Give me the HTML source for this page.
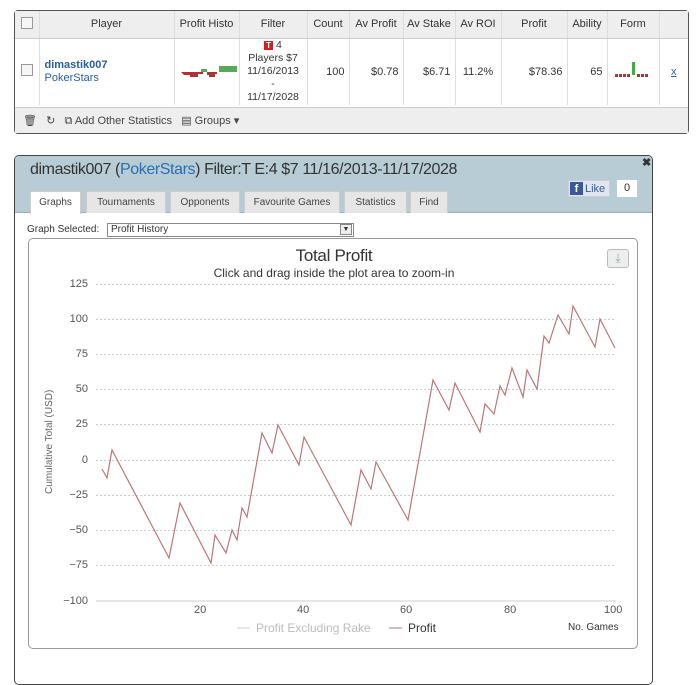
<!DOCTYPE html>
<html><head><meta charset="utf-8"><style>
*{box-sizing:border-box;margin:0;padding:0}
body{width:700px;height:652px;background:#fff;font-family:"Liberation Sans",sans-serif;position:relative;overflow:hidden;font-size:11px;color:#333}
.a{position:absolute}
table{border-collapse:collapse;position:absolute;left:15px;top:11px;width:673px}
td{border-right:1px solid #ddd;text-align:center;font-size:11px;color:#333}
.hd td{height:27px;background:#eee;border-bottom:1px solid #ccc}
.rw td{height:67px}
.cb{display:inline-block;width:12px;height:12px;border:1px solid #999;background:#f6f6f6}
.tab{position:absolute;top:191px;height:22px;background:#e6e6e6;border:1px solid #ccc;border-bottom:none;font-size:10px;color:#444;text-align:center;line-height:21px}
.yl{position:absolute;left:40px;width:48px;text-align:right;font-size:11px;color:#555}
.xl{position:absolute;top:604px;font-size:11px;color:#555}
</style></head><body>
<div class="a" style="left:14px;top:10px;width:675px;height:124px;border:1px solid #555;border-radius:4px"></div>
<table>
<tr class="hd"><td style="width:24px"><span class="cb"></span></td><td style="width:135px">Player</td><td style="width:65px">Profit Histo</td><td style="width:68px">Filter</td><td style="width:42px">Count</td><td style="width:54px">Av Profit</td><td style="width:52px">Av Stake</td><td style="width:46px">Av ROI</td><td style="width:66px">Profit</td><td style="width:40px">Ability</td><td style="width:52px">Form</td><td style="border:none;border-bottom:1px solid #ccc"></td></tr>
<tr class="rw"><td><span class="cb"></span></td><td style="text-align:left;padding-left:5px;line-height:13px"><b style="color:#2a5d9f">dimastik007</b><br><span style="color:#2a5d9f">PokerStars</span></td>
<td><svg width="60" height="20" viewBox="0 0 60 20"><path d="M4 12h22v2h-5v3h-8v-2h-6z M30 12h10v2h-2v3h-6v-2h-2z" fill="#a33"/><path d="M24 9h6v3h-6z M42 6h18v6h-18z" fill="#5a5"/></svg></td>
<td style="line-height:13px;font-size:10.5px"><span style="background:#c22;color:#fff;font-size:8px;font-weight:bold;padding:0 2px">T</span> 4<br>Players $7<br>11/16/2013<br>-<br>11/17/2028</td>
<td style="text-align:right;padding-right:4px">100</td><td style="text-align:right;padding-right:4px">$0.78</td><td style="text-align:right;padding-right:4px">$6.71</td><td>11.2%</td><td style="text-align:right;padding-right:4px">$78.36</td><td style="text-align:right;padding-right:4px">65</td>
<td><svg width="40" height="20"><g fill="#a33"><rect x="2" y="14" width="3" height="3"/><rect x="6" y="14" width="3" height="3"/><rect x="10" y="14" width="3" height="3"/><rect x="14" y="14" width="3" height="3"/><rect x="24" y="14" width="3" height="3"/><rect x="28" y="14" width="3" height="3"/><rect x="32" y="14" width="3" height="3"/></g><rect x="19" y="2" width="3" height="13" fill="#4a4"/></svg></td>
<td style="border:none;color:#2a5d9f;text-decoration:underline">x</td></tr>
</table>
<div class="a" style="left:15px;top:107px;width:673px;height:26px;background:#eee;border-top:1px solid #ccc;font-size:11px;color:#444;line-height:26px;padding-left:8px">🗑&nbsp;&nbsp;&nbsp;↻&nbsp;&nbsp;&nbsp;⧉ Add Other Statistics&nbsp;&nbsp;&nbsp;▤ Groups ▾</div>

<div class="a" style="left:14px;top:155px;width:639px;height:530px;border:1px solid #444;border-radius:5px;overflow:hidden">
<div class="a" style="left:0;top:0;width:639px;height:57px;background:#b7ccd4;border-bottom:1px solid #aaa"></div>
</div>
<div class="a" style="left:30px;top:161px;font-size:16px;color:#333;letter-spacing:-0.4px">dimastik007 (<span style="color:#2a6fb0">PokerStars</span>) Filter:T E:4 $7 11/16/2013-11/17/2028</div>
<div class="a" style="left:642px;top:156px;font-size:11px;font-weight:bold">✖</div>
<div class="a" style="left:568px;top:180px;width:42px;height:17px;background:#dfe6ee;border:1px solid #ccd;font-size:11px;line-height:15px;color:#3b5998"><span style="display:inline-block;width:13px;height:13px;background:#3b5998;color:#fff;font-weight:bold;text-align:center;margin:1px 2px 0 1px;line-height:14px">f</span>Like</div>
<div class="a" style="left:617px;top:180px;width:20px;height:17px;background:#fff;font-size:11px;line-height:17px;text-align:center">0</div>
<div class="tab" style="left:30px;width:51px;background:#fff;height:23px">Graphs</div>
<div class="tab" style="left:86px;width:80px">Tournaments</div>
<div class="tab" style="left:170px;width:70px">Opponents</div>
<div class="tab" style="left:244px;width:96px">Favourite Games</div>
<div class="tab" style="left:344px;width:63px">Statistics</div>
<div class="tab" style="left:410px;width:38px">Find</div>
<div class="a" style="left:27px;top:224px;font-size:10px;color:#333">Graph Selected:</div>
<div class="a" style="left:107px;top:223px;width:247px;height:14px;border:1px solid #888;font-size:10px;line-height:12px;padding-left:3px">Profit History<span style="position:absolute;right:1px;top:0;width:12px;height:11px;border:1px solid #888;font-size:7px;text-align:center;line-height:10px;background:#eee">▼</span></div>
<div class="a" style="left:28px;top:238px;width:610px;height:411px;border:1px solid #999;border-radius:5px"></div>
<div class="a" style="left:0;top:246px;width:668px;text-align:center;font-size:17px;color:#333;letter-spacing:-0.3px">Total Profit</div>
<div class="a" style="left:0;top:266px;width:668px;text-align:center;font-size:12px;color:#333">Click and drag inside the plot area to zoom-in</div>
<div class="a" style="left:607px;top:249px;width:22px;height:19px;border:1px solid #bbb;border-radius:3px;background:#eee;color:#9a9;text-align:center;font-size:12px;line-height:17px">⤓</div>
<svg class="a" style="left:0;top:0" width="700" height="652">
<g stroke="#ccc" stroke-width="1" stroke-dasharray="2,2">
<line x1="96" x2="616" y1="284.5" y2="284.5"/><line x1="96" x2="616" y1="319.5" y2="319.5"/><line x1="96" x2="616" y1="354.5" y2="354.5"/><line x1="96" x2="616" y1="389.5" y2="389.5"/><line x1="96" x2="616" y1="424.5" y2="424.5"/><line x1="96" x2="616" y1="460.5" y2="460.5"/><line x1="96" x2="616" y1="495.5" y2="495.5"/><line x1="96" x2="616" y1="530.5" y2="530.5"/><line x1="96" x2="616" y1="565.5" y2="565.5"/></g>
<line x1="96" x2="616" y1="601" y2="601" stroke="#ccc"/>
<polyline fill="none" stroke="#b77" stroke-width="1.2" points="102,469 107,478 112,450 169,558 180,503 211,563 215,535 226,553 232,530 237,540 242,508 247,517 262,433 272,453 278,425 299,465 304,437 351,525 361,470 371,489 376,462 408,520 433,380 449,410 455,383 480,432 485,404 494,414 500,386 505,395 512,368 523,397 527,370 537,389 544,336 549,343 558,315 569,334 573,306 595,347 600,319 615,348"/>
<line x1="237" x2="250" y1="628" y2="628" stroke="#ccc"/><line x1="389" x2="402" y1="628" y2="628" stroke="#b77"/>
<text transform="translate(52,494) rotate(-90)" font-size="10" fill="#666" font-family="Liberation Sans">Cumulative Total (USD)</text>
</svg>
<div class="yl" style="top:278px">125</div><div class="yl" style="top:313px">100</div><div class="yl" style="top:348px">75</div><div class="yl" style="top:383px">50</div><div class="yl" style="top:418px">25</div><div class="yl" style="top:454px">0</div><div class="yl" style="top:489px">−25</div><div class="yl" style="top:524px">−50</div><div class="yl" style="top:559px">−75</div><div class="yl" style="top:595px">−100</div>
<div class="xl" style="left:194px">20</div><div class="xl" style="left:297px">40</div><div class="xl" style="left:400px">60</div><div class="xl" style="left:504px">80</div><div class="xl" style="left:604px">100</div>
<div class="a" style="left:256px;top:621px;font-size:12px;color:#bbb">Profit Excluding Rake</div>
<div class="a" style="left:408px;top:621px;font-size:12px;color:#333">Profit</div>
<div class="a" style="left:568px;top:622px;font-size:10px;color:#333">No. Games</div>
</body></html>
